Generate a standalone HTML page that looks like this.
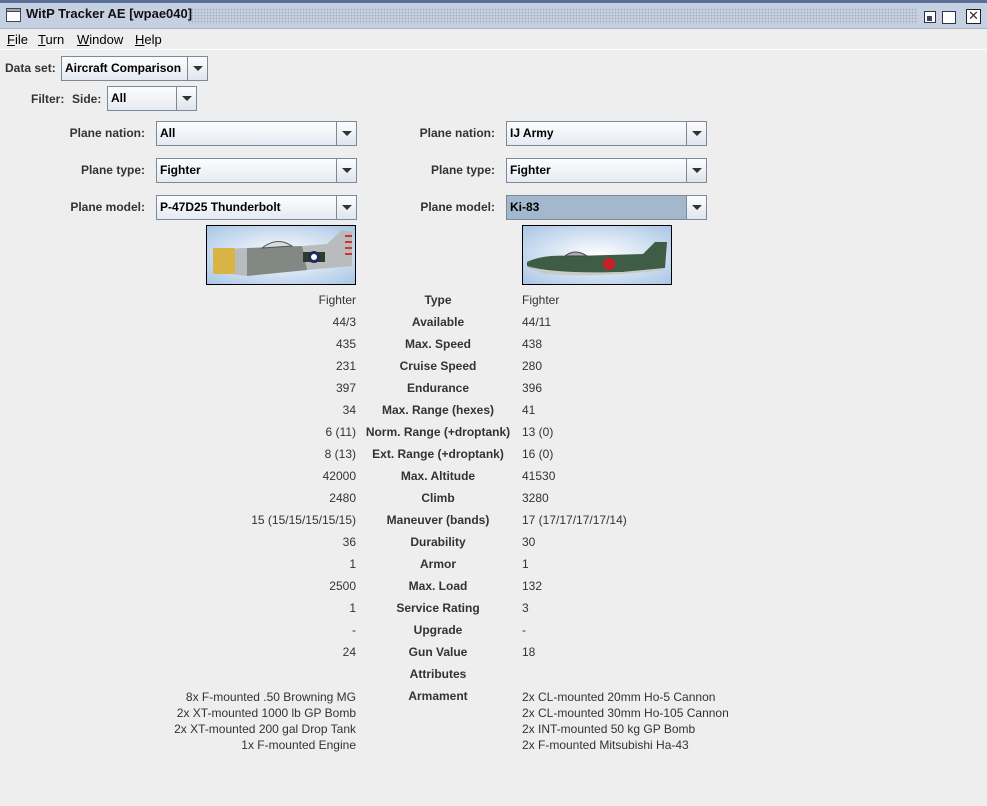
<!DOCTYPE html>
<html><head><meta charset="utf-8">
<style>
*{margin:0;padding:0;box-sizing:border-box}
body{width:987px;height:805px;background:#eeeeee;font-family:"Liberation Sans",Arial,sans-serif;font-size:12px;color:#333;position:relative;overflow:hidden}
.a{position:absolute;white-space:nowrap}
.title{left:0;top:0;width:987px;height:29px;background:#c5d0e2;border-top:3px solid #5a6f98;border-bottom:1px solid #a9b6c9}
.dots{position:absolute;left:188px;top:5px;width:730px;height:16px;background-image:radial-gradient(#aab4c4 1px,transparent 1px);background-size:3px 3px}
.menu{left:0;top:29px;width:987px;height:21px;background:#eeeeee;border-bottom:1px solid #fff}
.menu span{position:absolute;top:3px;font-size:13px;color:#000}
.cb{position:absolute;height:25px;border:1px solid #7a8a99;background:linear-gradient(#fdfdfe,#e5eaf2);font-weight:bold;color:#000;padding-left:3px;line-height:23px}
.cb .btn{position:absolute;right:0;top:0;width:20px;height:23px;border-left:1px solid #7a8a99;background:linear-gradient(#fdfdfe,#dfe5ee)}
.cb .btn:after{content:"";position:absolute;left:5px;top:9px;border-left:5px solid transparent;border-right:5px solid transparent;border-top:5px solid #333}
.lb{position:absolute;font-weight:bold;color:#333;text-align:right;line-height:25px}
.l{position:absolute;width:200px;left:156px;text-align:right;line-height:14px}
.c{position:absolute;width:180px;left:348px;text-align:center;font-weight:bold;line-height:14px}
.r{position:absolute;left:522px;line-height:14px}
.img{position:absolute;border:1px solid #000;width:150px;height:60px;overflow:hidden}
.rows{position:absolute;left:0;top:1px;width:987px;height:805px}
</style></head><body>
<div class="a title"><div class="dots"></div>
<div class="a" style="left:6px;top:5px;width:15px;height:14px;border:1px solid #445;background:#fff"><div style="height:3px;background:#9aa8bc;border-bottom:1px solid #445"></div></div>
<div class="a" style="left:26px;top:3px;font-weight:bold;font-size:13px;color:#111">WitP Tracker AE [wpae040]</div>
<div class="a" style="left:924px;top:8px;width:12px;height:12px;background:#fff;border:1px solid #334"><div style="position:absolute;left:2px;top:4px;width:5px;height:5px;background:#445"></div></div>
<div class="a" style="left:942px;top:8px;width:14px;height:13px;background:#fff;border:1px solid #334"></div>
<div class="a" style="left:966px;top:6px;width:15px;height:15px;border:1px solid #222;background:#fff;font-size:13px;line-height:12px;text-align:center">✕</div>
</div>
<div class="a menu">
<span style="left:7px"><u>F</u>ile</span><span style="left:38px"><u>T</u>urn</span><span style="left:77px"><u>W</u>indow</span><span style="left:135px"><u>H</u>elp</span>
</div>
<div class="a" style="left:5px;top:61px;color:#333;font-weight:bold">Data set:</div>
<div class="cb" style="left:61px;top:56px;width:147px">Aircraft Comparison<div class="btn"></div></div>
<div class="a" style="left:31px;top:92px;font-weight:bold">Filter:</div>
<div class="a" style="left:72px;top:92px;font-weight:bold">Side:</div>
<div class="cb" style="left:107px;top:86px;width:90px">All<div class="btn"></div></div>

<div class="lb" style="left:40px;width:105px;top:121px">Plane nation:</div>
<div class="cb" style="left:156px;top:121px;width:201px">All<div class="btn"></div></div>
<div class="lb" style="left:40px;width:105px;top:158px">Plane type:</div>
<div class="cb" style="left:156px;top:158px;width:201px">Fighter<div class="btn"></div></div>
<div class="lb" style="left:40px;width:105px;top:195px">Plane model:</div>
<div class="cb" style="left:156px;top:195px;width:201px">P-47D25 Thunderbolt<div class="btn"></div></div>

<div class="lb" style="left:390px;width:105px;top:121px">Plane nation:</div>
<div class="cb" style="left:506px;top:121px;width:201px">IJ Army<div class="btn"></div></div>
<div class="lb" style="left:390px;width:105px;top:158px">Plane type:</div>
<div class="cb" style="left:506px;top:158px;width:201px">Fighter<div class="btn"></div></div>
<div class="lb" style="left:390px;width:105px;top:195px">Plane model:</div>
<div class="cb" style="left:506px;top:195px;width:201px;background:#a3b8cc">Ki-83<div class="btn"></div></div>

<div class="img" style="left:206px;top:225px">
<svg width="148" height="58"><defs><radialGradient id="s" cx="50%" cy="50%" r="70%"><stop offset="0" stop-color="#fff"/><stop offset="1" stop-color="#a9c6e6"/></radialGradient></defs>
<rect width="148" height="58" fill="url(#s)"/>
<path d="M6 28 Q20 22 40 22 L95 20 L120 18 L135 4 L145 6 L145 40 L100 44 L40 50 Q15 48 6 40Z" fill="#b9bcbd"/>
<path d="M40 22 L95 20 L100 44 L40 50Z" fill="#5d665d" opacity=".6"/>
<rect x="6" y="22" width="22" height="26" fill="#d9b344"/>
<path d="M55 22 Q70 10 85 20Z" fill="#d8dde0" stroke="#555"/>
<rect x="96" y="26" width="22" height="10" fill="#2e3c2e"/><circle cx="107" cy="31" r="6" fill="#1e2c5a"/><circle cx="107" cy="31" r="3" fill="#fff"/>
<path d="M138 10h7M138 16h7M138 22h7M138 28h7" stroke="#c33" stroke-width="2"/>
</svg></div>
<div class="img" style="left:522px;top:225px">
<svg width="148" height="58"><defs><radialGradient id="t" cx="50%" cy="50%" r="70%"><stop offset="0" stop-color="#fff"/><stop offset="1" stop-color="#a9c6e6"/></radialGradient></defs>
<rect width="148" height="58" fill="url(#t)"/>
<path d="M4 36 Q20 28 50 30 L120 28 L132 16 L144 16 L142 42 L100 46 L40 48 Q12 46 4 40Z" fill="#3f5d45"/>
<path d="M4 40 Q30 48 100 46 L142 42 L140 44 Q80 52 20 48Z" fill="#c8cbc8"/>
<path d="M42 30 Q52 22 64 30Z" fill="#aab" stroke="#444"/>
<circle cx="86" cy="38" r="6" fill="#c8202a"/>
</svg></div>

<div class="rows">
<div class="l" style="top:292px">Fighter</div><div class="c" style="top:292px">Type</div><div class="r" style="top:292px">Fighter</div>
<div class="l" style="top:314px">44/3</div><div class="c" style="top:314px">Available</div><div class="r" style="top:314px">44/11</div>
<div class="l" style="top:336px">435</div><div class="c" style="top:336px">Max. Speed</div><div class="r" style="top:336px">438</div>
<div class="l" style="top:358px">231</div><div class="c" style="top:358px">Cruise Speed</div><div class="r" style="top:358px">280</div>
<div class="l" style="top:380px">397</div><div class="c" style="top:380px">Endurance</div><div class="r" style="top:380px">396</div>
<div class="l" style="top:402px">34</div><div class="c" style="top:402px">Max. Range (hexes)</div><div class="r" style="top:402px">41</div>
<div class="l" style="top:424px">6 (11)</div><div class="c" style="top:424px">Norm. Range (+droptank)</div><div class="r" style="top:424px">13 (0)</div>
<div class="l" style="top:446px">8 (13)</div><div class="c" style="top:446px">Ext. Range (+droptank)</div><div class="r" style="top:446px">16 (0)</div>
<div class="l" style="top:468px">42000</div><div class="c" style="top:468px">Max. Altitude</div><div class="r" style="top:468px">41530</div>
<div class="l" style="top:490px">2480</div><div class="c" style="top:490px">Climb</div><div class="r" style="top:490px">3280</div>
<div class="l" style="top:512px">15 (15/15/15/15/15)</div><div class="c" style="top:512px">Maneuver (bands)</div><div class="r" style="top:512px">17 (17/17/17/17/14)</div>
<div class="l" style="top:534px">36</div><div class="c" style="top:534px">Durability</div><div class="r" style="top:534px">30</div>
<div class="l" style="top:556px">1</div><div class="c" style="top:556px">Armor</div><div class="r" style="top:556px">1</div>
<div class="l" style="top:578px">2500</div><div class="c" style="top:578px">Max. Load</div><div class="r" style="top:578px">132</div>
<div class="l" style="top:600px">1</div><div class="c" style="top:600px">Service Rating</div><div class="r" style="top:600px">3</div>
<div class="l" style="top:622px">-</div><div class="c" style="top:622px">Upgrade</div><div class="r" style="top:622px">-</div>
<div class="l" style="top:644px">24</div><div class="c" style="top:644px">Gun Value</div><div class="r" style="top:644px">18</div>
<div class="c" style="top:666px">Attributes</div>
<div class="c" style="top:688px">Armament</div>
<div class="l" style="top:688px;line-height:16px;left:106px;width:250px">8x F-mounted .50 Browning MG<br>2x XT-mounted 1000 lb GP Bomb<br>2x XT-mounted 200 gal Drop Tank<br>1x F-mounted Engine</div>
<div class="r" style="top:688px;line-height:16px">2x CL-mounted 20mm Ho-5 Cannon<br>2x CL-mounted 30mm Ho-105 Cannon<br>2x INT-mounted 50 kg GP Bomb<br>2x F-mounted Mitsubishi Ha-43</div>
</div>
</body></html>
